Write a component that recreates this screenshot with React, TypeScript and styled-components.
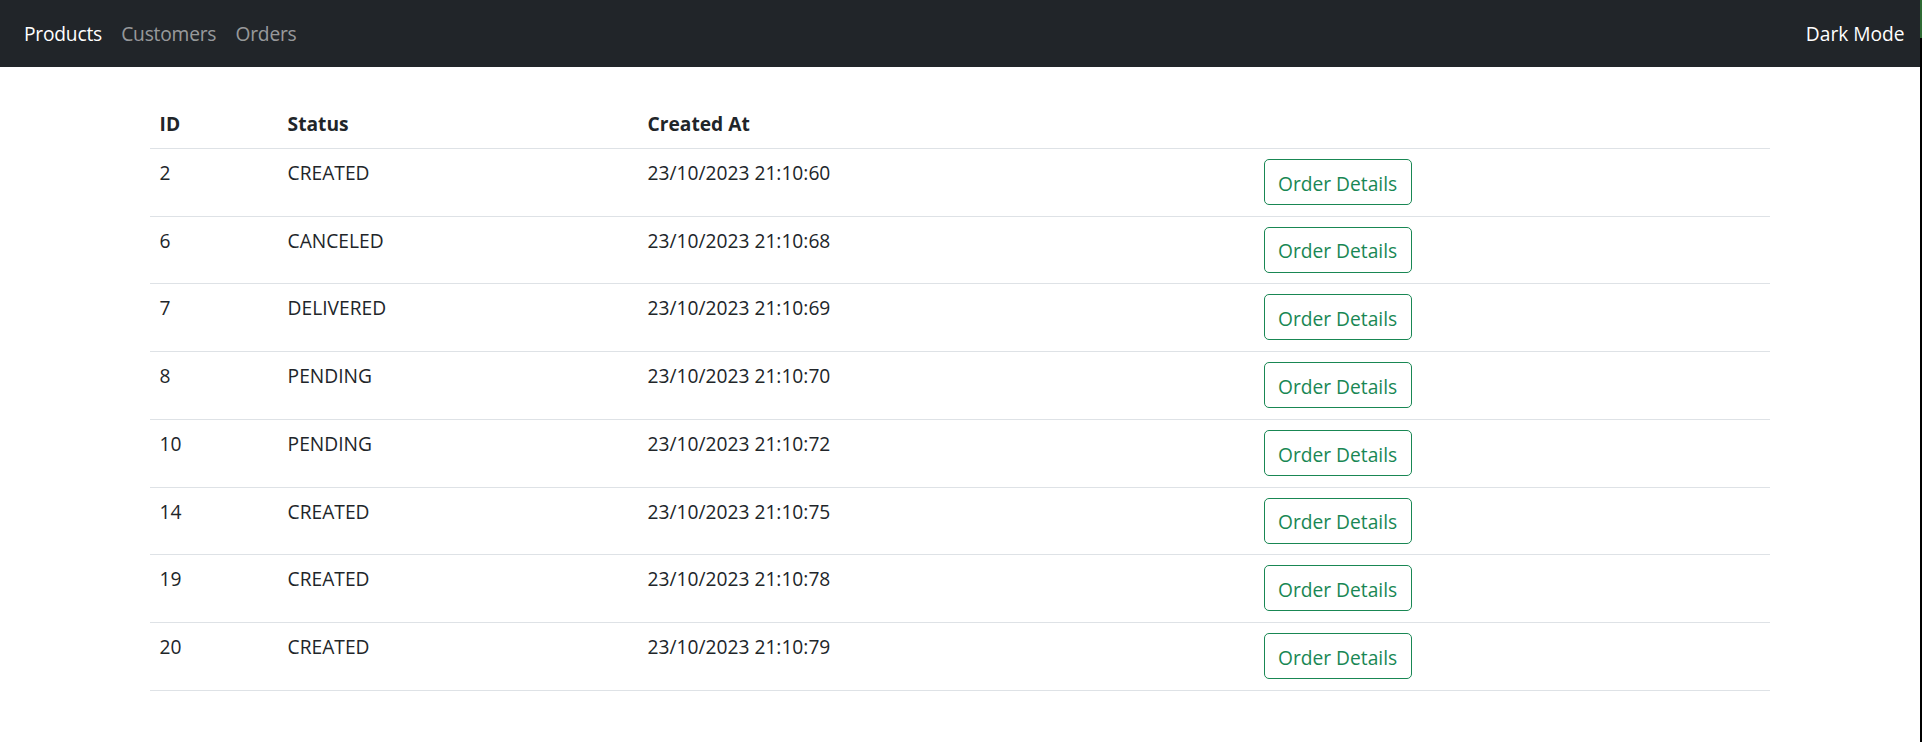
import React from "react";
import styled, { createGlobalStyle } from "styled-components";

const GlobalStyle = createGlobalStyle`
  html, body {
    margin: 0;
    padding: 0;
    background: #ffffff;
  }
  body {
    font-family: "Segoe UI", "Open Sans", "Noto Sans", Arial, sans-serif;
    font-size: 19.2px;
    line-height: 28.8px;
    color: #212529;
    -webkit-font-smoothing: antialiased;
  }
  * { box-sizing: border-box; }
`;

const Shell = styled.div`
  display: flex;
  width: 1922px;
  min-height: 742px;
`;

const Page = styled.div`
  flex: 1;
  display: flex;
  flex-direction: column;
  min-width: 0;
`;

const EdgeStrip = styled.div`
  width: 2px;
  flex: 0 0 2px;
  background: linear-gradient(to bottom, #2f6b34 0, #2f6b34 38px, #000000 38px, #000000 100%);
`;

const Navbar = styled.nav`
  height: 67px;
  background: #212529;
  display: flex;
  align-items: center;
  justify-content: space-between;
  padding: 1px 14.4px 0;
`;

const NavLinks = styled.div`
  display: flex;
  align-items: center;
`;

const NavLink = styled.a<{ $active?: boolean }>`
  display: block;
  padding: 9.6px;
  color: ${(p) => (p.$active ? "#ffffff" : "rgba(255, 255, 255, 0.55)")};
  text-decoration: none;
  font-size: 19.2px;
  letter-spacing: -0.2px;
  line-height: 28.8px;
  cursor: pointer;
`;

const ModeLabel = styled.span`
  color: #ffffff;
  font-size: 19.2px;
  line-height: 28.8px;
  padding-right: 1px;
`;

const Main = styled.main`
  padding: 33px 150px 0;
`;

const Table = styled.div`
  display: flex;
  flex-direction: column;
  width: 1620px;
`;

const Row = styled.div`
  display: grid;
  grid-template-columns: 128px 360px 616px 1fr;
  align-items: start;
  border-bottom: 1px solid #dee2e6;
`;

const HeadCell = styled.div`
  padding: 9.6px;
  font-weight: 700;
  line-height: 28.8px;
`;

const Cell = styled.div`
  padding: 10px 9.6px 10.75px;
  line-height: 28.8px;
`;

const DetailsButton = styled.button`
  display: inline-flex;
  align-items: center;
  justify-content: center;
  width: 148px;
  height: 46px;
  padding: 4px 0 0;
  border: 1px solid #198754;
  border-radius: 5px;
  background: transparent;
  color: #198754;
  font-family: inherit;
  font-size: 19.2px;
  line-height: 28.8px;
  cursor: pointer;
`;

const orders = [
  { id: 2, status: "CREATED", createdAt: "23/10/2023 21:10:60" },
  { id: 6, status: "CANCELED", createdAt: "23/10/2023 21:10:68" },
  { id: 7, status: "DELIVERED", createdAt: "23/10/2023 21:10:69" },
  { id: 8, status: "PENDING", createdAt: "23/10/2023 21:10:70" },
  { id: 10, status: "PENDING", createdAt: "23/10/2023 21:10:72" },
  { id: 14, status: "CREATED", createdAt: "23/10/2023 21:10:75" },
  { id: 19, status: "CREATED", createdAt: "23/10/2023 21:10:78" },
  { id: 20, status: "CREATED", createdAt: "23/10/2023 21:10:79" },
];

export default function App() {
  return (
    <>
      <GlobalStyle />
      <Shell>
        <Page>
          <Navbar>
            <NavLinks>
              <NavLink $active>Products</NavLink>
              <NavLink>Customers</NavLink>
              <NavLink>Orders</NavLink>
            </NavLinks>
            <ModeLabel>Dark Mode</ModeLabel>
          </Navbar>
          <Main>
            <Table>
              <Row>
                <HeadCell>ID</HeadCell>
                <HeadCell>Status</HeadCell>
                <HeadCell>Created At</HeadCell>
                <HeadCell />
              </Row>
              {orders.map((o) => (
                <Row key={o.id}>
                  <Cell>{o.id}</Cell>
                  <Cell>{o.status}</Cell>
                  <Cell>{o.createdAt}</Cell>
                  <Cell>
                    <DetailsButton>Order Details</DetailsButton>
                  </Cell>
                </Row>
              ))}
            </Table>
          </Main>
        </Page>
        <EdgeStrip />
      </Shell>
    </>
  );
}
